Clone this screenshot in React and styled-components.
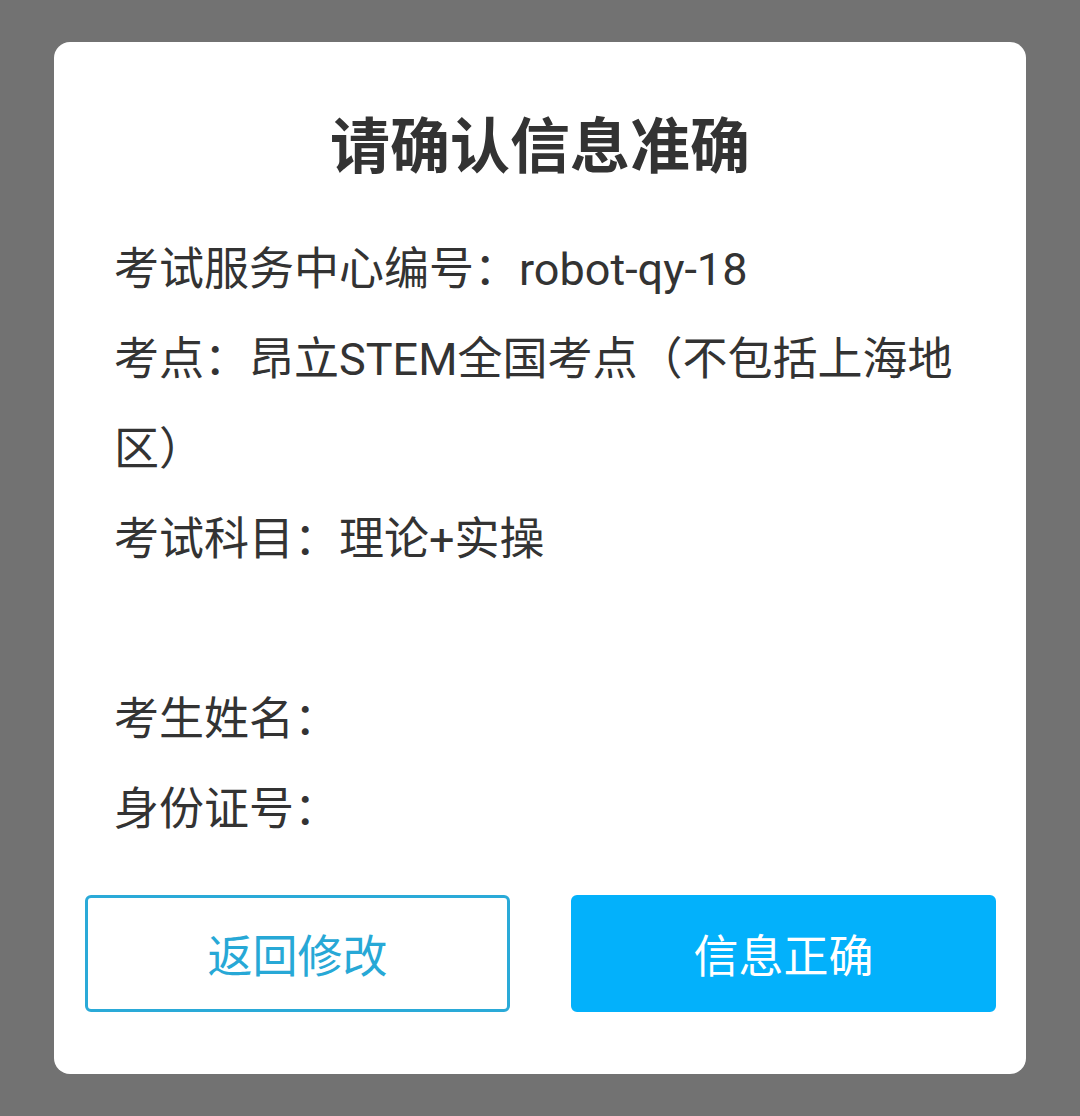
import styled, {createGlobalStyle} from "styled-components";

const GlobalStyle = createGlobalStyle`
    html, body {
        margin:0;
        padding:0;
        background:#727272;
    }
    body {
        font-family: Roboto, "Noto Sans CJK SC", "Noto Sans", sans-serif;
    }
`;

const Overlay = styled.div`
    min-height:1116px;
    display:flex;
    align-items:center;
    justify-content:center;
    background:#727272;
`;

const Dialog = styled.div`
    width:972px;
    box-sizing:border-box;
    padding:55px 62px 62px;
    background:#fff;
    border-radius:16px;
    display:flex;
    flex-direction:column;
`;

const Title = styled.h2`
    margin:0 0 38px;
    font-size:60px;
    line-height:90px;
    font-weight:700;
    color:#333;
    text-align:center;
    font-family: "Noto Sans CJK SC", sans-serif;
`;

const InfoList = styled.div`
    display:flex;
    flex-direction:column;
    margin-left:-2px;
    font-size:45px;
    line-height:90px;
    color:#333;
`;

const InfoLine = styled.div`
    min-height:90px;
`;

const ButtonRow = styled.div`
    display:grid;
    grid-template-columns:1fr 1fr;
    gap:61px;
    margin:40px -32px 0 -31px;
`;

const ActionButton = styled.button`
    height:117px;
    box-sizing:border-box;
    border-radius:6px;
    font-family: "Noto Sans CJK SC", sans-serif;
    font-size:45px;
    cursor:pointer;
    border:3px solid ${props => props.primary ? "#03b1fb" : "#2aaad8"};
    background:${props => props.primary ? "#03b1fb" : "#fff"};
    color:${props => props.primary ? "#fff" : "#27a8d6"};
`;

const lines = [
    "考试服务中心编号：robot-qy-18",
    "考点：昂立STEM全国考点（不包括上海地区）",
    "考试科目：理论+实操",
    "",
    "考生姓名：",
    "身份证号：",
];

const App = () => {
    return (
        <>
            <GlobalStyle />
            <Overlay>
                <Dialog>
                    <Title>请确认信息准确</Title>
                    <InfoList>
                        {lines.map((text, idx) => (
                            <InfoLine key={idx}>{text}</InfoLine>
                        ))}
                    </InfoList>
                    <ButtonRow>
                        <ActionButton>返回修改</ActionButton>
                        <ActionButton primary>信息正确</ActionButton>
                    </ButtonRow>
                </Dialog>
            </Overlay>
        </>
    );
};

export default App;
